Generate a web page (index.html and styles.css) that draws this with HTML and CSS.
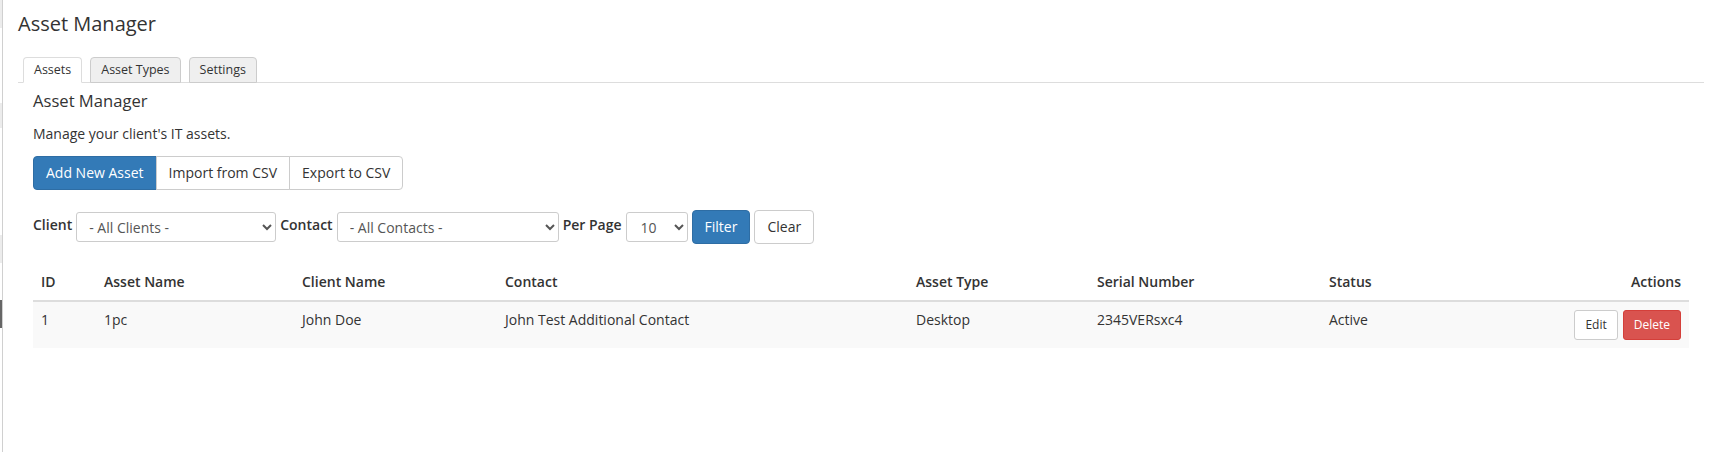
FILE: index.html
```html
<!DOCTYPE html>
<html lang="en">
<head>
<meta charset="utf-8">
<title>Asset Manager</title>
<link rel="stylesheet" href="styles.css">
</head>
<body>
<div class="edge">
  <div class="mark m1"></div>
  <div class="mark m2"></div>
  <div class="mark m3"></div>
  <div class="mark m4 dark"></div>
</div>
<div class="page">
  <h1 class="title">Asset Manager</h1>
  <ul class="tabs">
    <li class="tab active">Assets</li>
    <li class="tab">Asset Types</li>
    <li class="tab">Settings</li>
  </ul>
  <div class="tab-content">
    <h2 class="subtitle">Asset Manager</h2>
    <p class="lead">Manage your client's IT assets.</p>
    <div class="btn-group">
      <button class="btn btn-primary">Add New Asset</button>
      <button class="btn btn-default">Import from CSV</button>
      <button class="btn btn-default">Export to CSV</button>
    </div>
    <form class="filters">
      <label class="flabel">Client</label>
      <select class="fselect sel-client"><option>- All Clients -</option></select>
      <label class="flabel">Contact</label>
      <select class="fselect sel-contact"><option>- All Contacts -</option></select>
      <label class="flabel">Per Page</label>
      <select class="fselect sel-page"><option>10</option></select>
      <button type="button" class="btn btn-primary">Filter</button>
      <button type="button" class="btn btn-default">Clear</button>
    </form>
    <table class="grid">
      <thead>
        <tr>
          <th class="c-id">ID</th>
          <th class="c-name">Asset Name</th>
          <th class="c-client">Client Name</th>
          <th class="c-contact">Contact</th>
          <th class="c-type">Asset Type</th>
          <th class="c-serial">Serial Number</th>
          <th class="c-status">Status</th>
          <th class="c-actions">Actions</th>
        </tr>
      </thead>
      <tbody>
        <tr class="odd">
          <td>1</td>
          <td>1pc</td>
          <td>John Doe</td>
          <td>John Test Additional Contact</td>
          <td>Desktop</td>
          <td>2345VERsxc4</td>
          <td>Active</td>
          <td class="c-actions"><button class="btn btn-sm btn-default">Edit</button><button class="btn btn-sm btn-danger">Delete</button></td>
        </tr>
      </tbody>
    </table>
  </div>
</div>
</body>
</html>
```
FILE: styles.css
```css
html, body {
  margin: 0;
  padding: 0;
  background: #fff;
}
body {
  display: flex;
  min-height: 452px;
  font-family: "Open Sans", "Noto Sans", sans-serif;
  font-size: 14px;
  line-height: 20px;
  color: #333;
}
.edge {
  width: 2px;
  border-right: 1px solid #d0d0d0;
  display: flex;
  flex-direction: column;
  flex: none;
}
.mark { width: 2px; background: #ececec; }
.m1 { height: 28px; }
.m2 { height: 25px; margin-top: 75px; }
.m3 { height: 28px; margin-top: 107px; }
.m4 { height: 28px; margin-top: 37px; }
.mark.dark { background: #666; }

.page {
  flex: 1;
  padding: 13px 10px 0 15px;
}
.title {
  margin: 0;
  font-size: 20px;
  line-height: 22px;
  font-weight: 400;
  color: #333;
}
.tabs {
  list-style: none;
  margin: 22px 0 0;
  padding: 0 0 0 5px;
  display: flex;
  gap: 8px;
  border-bottom: 1px solid #ddd;
}
.tab {
  margin-bottom: -1px;
  padding: 3px 10px;
  font-size: 12.5px;
  line-height: 18px;
  border: 1px solid #ccc;
  border-radius: 4px 4px 0 0;
  background: #efefef;
  color: #333;
}
.tab.active {
  background: #fff;
  border-color: #ddd;
  border-bottom-color: #fff;
}
.tab-content {
  padding: 8px 15px 0;
}
.subtitle {
  margin: 0 0 13px;
  font-size: 16.6px;
  line-height: 20px;
  font-weight: 400;
  color: #333;
}
.lead {
  margin: 0 0 12px;
}
.btn {
  font-family: inherit;
  font-size: 14px;
  line-height: 20px;
  padding: 6px 12px;
  border: 1px solid #ccc;
  border-radius: 4px;
  background: #fff;
  color: #333;
  margin: 0;
  cursor: pointer;
}
.btn-primary {
  background: #337ab7;
  border-color: #2e6da4;
  color: #fff;
}
.btn-danger {
  background: #d9534f;
  border-color: #d43f3a;
  color: #fff;
}
.btn-sm {
  font-size: 12px;
  line-height: 18px;
  padding: 5px 10px;
  border-radius: 3px;
}
.btn-group {
  display: flex;
  margin-bottom: 20px;
}
.btn-group .btn { border-radius: 0; }
.btn-group .btn + .btn { margin-left: -1px; }
.btn-group .btn:first-child { border-radius: 4px 0 0 4px; }
.btn-group .btn:last-child { border-radius: 0 4px 4px 0; }

.filters {
  display: flex;
  align-items: center;
  gap: 4px;
  margin: 0 0 20px;
}
.flabel {
  font-weight: 600;
  line-height: 20px;
  margin-top: -4px;
}
.fselect {
  height: 30px;
  font-family: inherit;
  font-size: 14px;
  color: #555;
  border: 1px solid #ccc;
  border-radius: 3px;
  background: #fff;
  padding: 0 8px;
}
.sel-client { width: 200px; }
.sel-contact { width: 222px; }
.sel-page { width: 62px; padding-left: 10px; }

.grid {
  width: 100%;
  border-collapse: collapse;
  table-layout: fixed;
}
.grid th, .grid td {
  padding: 8px;
  text-align: left;
  vertical-align: top;
  line-height: 20px;
}
.grid th {
  font-weight: 600;
  border-bottom: 2px solid #ddd;
  vertical-align: bottom;
}
.grid tr.odd td { background: #f9f9f9; }
.c-id { width: 47px; }
.c-name { width: 182px; }
.c-client { width: 187px; }
.c-contact { width: 395px; }
.c-type { width: 165px; }
.c-serial { width: 216px; }
.c-status { width: 184px; }
.grid .c-actions { text-align: right; }
.c-actions .btn + .btn { margin-left: 5px; }
```
